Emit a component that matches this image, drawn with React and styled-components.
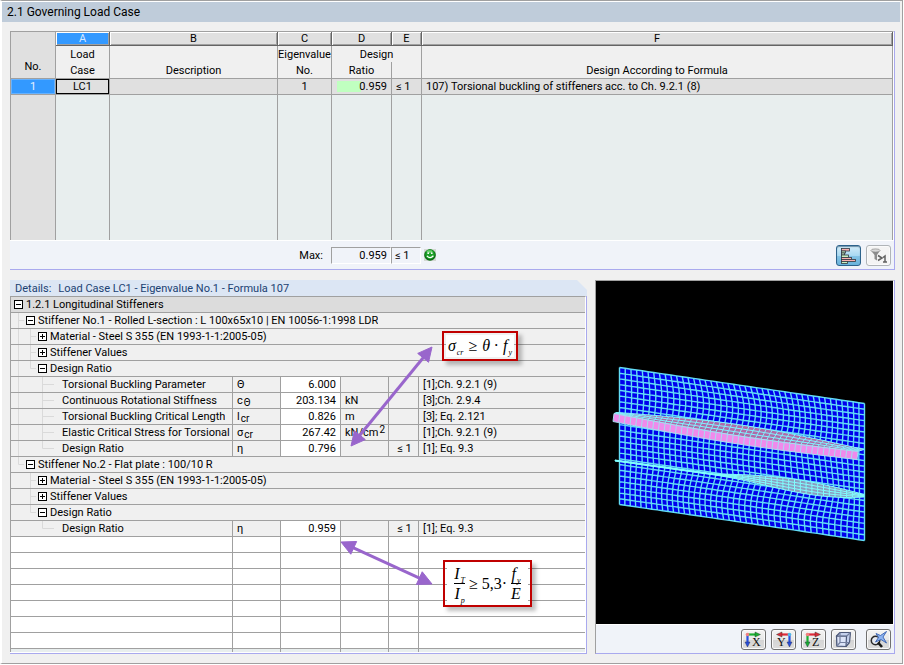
import React from 'react'
import styled, { createGlobalStyle, css } from 'styled-components'

const palette = {
  page: '#f0f0f0',
  line: '#a0a0a0',
  dark: '#646464',
  lavender: '#a9a9ee',
  footer: '#f0f3f9',
  sheet: '#e8eeee',
  header: '#e0e0e0',
  selected: '#3399ff',
  text: '#000',
  purple: '#9966cc',
  red: '#c00000',
}

const GlobalStyle = createGlobalStyle`
  * {
    box-sizing: border-box;
  }
  body {
    margin: 0;
    background: #fff;
    color: ${palette.text};
    font: 11px/15px Roboto, 'Liberation Sans', sans-serif;
  }
  button, input {
    font: inherit;
    color: inherit;
  }
`

const Frame = styled.main`
  margin: 0 1px 1px 0;
  border: 1px solid ${palette.line};
  border-left: 2px solid #fff;
  background: ${palette.page};
`

const Title = styled.h1`
  margin: 0 2px 0 0;
  padding: 0 5px;
  border-top: 1px solid #fff;
  height: 21px;
  background: #bfccda;
  font: 12px/20px Roboto, 'Open Sans', sans-serif;
`

const Content = styled.div`
  display: flex;
  flex-direction: column;
  gap: 10px;
  padding: 9px 7px 9px 8px;
`

const Panel = styled.section`
  border-right: 1px solid ${palette.lavender};
  border-bottom: 1px solid ${palette.lavender};
`

const Sheet = styled.table`
  width: 100%;
  table-layout: fixed;
  border-collapse: separate;
  border-spacing: 0;
  border-top: 1px solid ${palette.line};
  border-right: 1px solid #fff;
`

const Col = styled.col`
  width: ${props => (props.$width ? props.$width + 'px' : 'auto')};
`

const cell = css`
  padding: 0;
  overflow: hidden;
  white-space: nowrap;
  font-weight: normal;
  border: 0 solid ${palette.line};
  border-right-width: 1px;
  &:first-child {
    border-left-width: 1px;
  }
`

const Letter = styled.th`
  ${cell}
  height: 14px;
  line-height: 13px;
  border-right-color: ${palette.dark};
  border-bottom: 1px solid ${palette.dark};
  box-shadow: inset 1px 1px #fff, inset -1px -1px ${palette.line};
  background: ${props => (props.$selected ? palette.selected : palette.header)};
  color: ${props => (props.$selected ? '#d8e8ff' : palette.text)};
`

const Corner = styled.th`
  ${cell}
  border-bottom-width: 1px;
  background: ${palette.header};
  vertical-align: bottom;
  line-height: 23px;
`

const Head = styled.th`
  ${cell}
  height: ${props => (props.$last ? 17 : 16)}px;
  border-bottom-width: ${props => (props.$last ? 1 : 0)}px;
  &:first-child {
    border-left-width: 0;
  }
`

const RowNumber = styled.th`
  ${cell}
  height: 16px;
  border-bottom-width: 1px;
  background: ${palette.selected};
  box-shadow: inset 0 0 0 1px #66b2ff;
  color: #e6f0ff;
`

const ResultCell = styled.td`
  ${cell}
  height: 16px;
  padding: 0 4px;
  border-bottom-width: 1px;
  background: ${palette.header};
  text-align: ${props => props.$align || 'left'};
  ${props => props.$current && 'box-shadow: inset 0 0 0 1px #000;'}
`

const RatioCell = styled(ResultCell)`
  background: linear-gradient(#c0ffc0, #c0ffc0) 5px 2px / 24px 11px no-repeat
    ${palette.header};
  text-align: right;
`

const BlankCell = styled.td`
  ${cell}
  height: 145px;
  background: ${props => (props.$header ? palette.header : palette.sheet)};
`

const Footer = styled.footer`
  display: flex;
  align-items: center;
  height: 29px;
  border-top: 1px solid #fff;
  background: ${palette.footer};
`

const MaxLabel = styled.label`
  width: 321px;
  padding-right: 8px;
  text-align: right;
`

const MaxField = styled.input`
  width: ${props => props.$width}px;
  height: 17px;
  padding: 0 3px;
  border: 1px solid #fff;
  border-top-color: ${palette.line};
  border-left-color: ${palette.line};
  background: ${palette.footer};
  text-align: ${props => props.$align || 'left'};
  outline: none;
`

const Smiley = styled.svg`
  width: 12px;
  height: 12px;
  margin-left: 3px;
`

const Tools = styled.div`
  display: flex;
  gap: 5px;
  margin-left: auto;
  padding-right: ${props => props.$right}px;
`

const ToolButton = styled.button`
  display: flex;
  align-items: center;
  justify-content: center;
  width: 25px;
  height: 21px;
  padding: 0;
  border: 1px solid #707070;
  border-radius: 3px;
  background: linear-gradient(#f4f4f4, #e8e8e8 50%, #d4d4d4 51%, #dcdcdc);
  box-shadow: inset 0 0 0 1px #fafafa;
  ${props =>
    props.$variant === 'active' &&
    css`
      border-color: #2c628b;
      background: linear-gradient(#d4ecf8, #a9d9f2 50%, #86c4e6 51%, #68b3db);
      box-shadow: inset 0 1px 1px #6d91a8;
    `}
  ${props =>
    props.$variant === 'muted' &&
    css`
      border-color: #b0b4b8;
      background: #f4f4f4;
    `}
  ${props => props.$apart && 'margin-left: 5px;'}
  svg {
    flex: none;
    width: 19px;
    height: 17px;
  }
`

const Lower = styled.div`
  display: grid;
  grid-template-columns: minmax(0, 1fr) 300px;
  gap: 8px;
`

const Details = styled.section`
  position: relative;
`

const DetailsTitle = styled.h2`
  margin: 0;
  height: 16px;
  padding-left: 5px;
  background: #dce6f4;
  clip-path: polygon(0 0, calc(100% - 10px) 0, 100% 10px, 100% 100%, 0 100%);
  color: #1b4172;
  font: inherit;
  line-height: 17px;
  span {
    margin-left: 7px;
  }
`

const DetailsBody = styled(Panel)`
  padding-bottom: 1px;
  background: #fff;
`

const DetailCell = styled.td`
  ${cell}
  height: ${props => (props.$cut ? 3 : 16)}px;
  padding-left: ${props => (props.$first ? 1 : 4)}px;
  padding-right: ${props => (props.$align === 'right' ? 4 : 2)}px;
  border-bottom-width: ${props => (props.$cut ? 0 : 1)}px;
  background: ${props => props.$tone || palette.page};
  text-align: ${props => props.$align || 'left'};
  &:last-child {
    border-right-width: 0;
  }
  sub, sup {
    margin-left: 1px;
    font-size: 10px;
    line-height: 0;
    vertical-align: -2px;
  }
  sup {
    vertical-align: 3px;
  }
`

const TreeItem = styled.div`
  display: flex;
  height: 15px;
  overflow: hidden;
`

const Guide = styled.svg`
  flex: none;
  width: ${props => (props.$wide ? 24 : 12)}px;
  height: 15px;
`

const Toggle = styled.button`
  flex: none;
  width: 9px;
  height: 9px;
  margin: 3px 1px 3px 2px;
  padding: 0;
  border: 1px solid #000;
  background: #fff;
  svg {
    display: block;
    width: 7px;
    height: 7px;
  }
`

const TreeLabel = styled.span`
  padding-left: 2px;
  overflow: hidden;
`

const Arrows = styled.svg`
  position: absolute;
  inset: 0;
  width: 100%;
  height: 100%;
  pointer-events: none;
`

const Callout = styled.div`
  position: absolute;
  left: ${props => props.$left}px;
  top: ${props => props.$top}px;
  width: ${props => props.$width}px;
  height: ${props => props.$height}px;
  padding: 2px;
  border: 2px solid ${palette.red};
  box-shadow: 4px 4px 4px rgba(0, 0, 0, 0.25);
`

const Formula = styled.div`
  display: flex;
  align-items: center;
  justify-content: center;
  gap: ${props => props.$gap || 4}px;
  height: 100%;
  background: #fff;
  font: italic 16px/20px 'Liberation Serif', serif;
  sub {
    margin-left: 1px;
    font-size: 8px;
    line-height: 0;
    vertical-align: -4px;
  }
  b {
    font-style: normal;
    font-weight: normal;
  }
`

const Fraction = styled.span`
  display: flex;
  flex-direction: column;
  text-align: center;
  line-height: 18px;
  span + span {
    border-top: 1px solid #000;
    line-height: 19px;
  }
`

const Preview = styled(Panel)`
  display: flex;
  flex-direction: column;
  border-left: 1px solid ${palette.line};
`

const Scene = styled.svg`
  display: block;
  flex: 1;
  width: 100%;
  min-height: 0;
  border-top: 1px solid ${palette.line};
  border-right: 1px solid #fff;
  background: #000;
`

const details = [
  { kind: 'root', open: true, guides: '', label: '1.2.1 Longitudinal Stiffeners' },
  {
    kind: 'group',
    open: true,
    guides: 't',
    label: 'Stiffener No.1 - Rolled L-section : L 100x65x10 | EN 10056-1:1998 LDR',
  },
  { kind: 'group', guides: '|t', label: 'Material - Steel S 355 (EN 1993-1-1:2005-05)' },
  { kind: 'group', guides: '|t', label: 'Stiffener Values' },
  { kind: 'group', open: true, guides: '|l', label: 'Design Ratio' },
  { guides: '| t', label: 'Torsional Buckling Parameter', symbol: 'Θ', value: '6.000', source: '[1];Ch. 9.2.1 (9)' },
  {
    guides: '| t',
    label: 'Continuous Rotational Stiffness',
    symbol: 'c',
    index: 'Θ',
    value: '203.134',
    unit: 'kN',
    source: '[3];Ch. 2.9.4',
  },
  {
    guides: '| t',
    label: 'Torsional Buckling Critical Length',
    symbol: 'l',
    index: 'cr',
    value: '0.826',
    unit: 'm',
    source: '[3]; Eq. 2.121',
  },
  {
    guides: '| t',
    label: 'Elastic Critical Stress for Torsional B',
    symbol: 'σ',
    index: 'cr',
    value: '267.42',
    unit: 'kN/cm',
    power: '2',
    source: '[1];Ch. 9.2.1 (9)',
  },
  { guides: '| l', label: 'Design Ratio', symbol: 'η', value: '0.796', limit: '≤ 1', source: '[1]; Eq. 9.3' },
  { kind: 'group', open: true, guides: 'l', label: 'Stiffener No.2 - Flat plate : 100/10 R' },
  { kind: 'group', guides: ' t', label: 'Material - Steel S 355 (EN 1993-1-1:2005-05)' },
  { kind: 'group', guides: ' t', label: 'Stiffener Values' },
  { kind: 'group', open: true, guides: ' l', label: 'Design Ratio' },
  { guides: '  l', label: 'Design Ratio', symbol: 'η', value: '0.959', limit: '≤ 1', source: '[1]; Eq. 9.3' },
]

// one 12px step of the tree: | passes through, t branches, l ends
const guidePaths = {
  ' ': '',
  '|': 'M6.5 0V15',
  t: 'M6.5 0V15M6.5 7.5H',
  l: 'M6.5 0V7.5H',
}

const Tree = ({ item }) => (
  <TreeItem>
    {item.guides.split('').map((step, i) => {
      const wide = !item.kind && i === item.guides.length - 1
      const branch = step === 't' || step === 'l'
      return (
        <Guide key={i} $wide={wide} aria-hidden="true">
          <path
            d={guidePaths[step] + (branch ? (wide ? 18 : 12) : '')}
            fill="none"
            stroke="#dadada"
          />
        </Guide>
      )
    })}
    {item.kind && (
      <Toggle aria-expanded={!!item.open} aria-label={item.label}>
        <svg viewBox="0 0 7 7">
          <path d={item.open ? 'M1 3.5H6' : 'M1 3.5H6M3.5 1V6'} stroke="#000" />
        </svg>
      </Toggle>
    )}
    <TreeLabel>{item.label}</TreeLabel>
  </TreeItem>
)

const DetailRow = ({ item }) =>
  item.kind ? (
    <tr>
      <DetailCell $first colSpan={6} $tone={item.kind === 'root' ? '#dcdcdc' : undefined}>
        <Tree item={item} />
      </DetailCell>
    </tr>
  ) : (
    <tr>
      <DetailCell $first>
        <Tree item={item} />
      </DetailCell>
      <DetailCell>
        {item.symbol}
        {item.index && <sub>{item.index}</sub>}
      </DetailCell>
      <DetailCell $tone="#fff" $align="right">
        {item.value}
      </DetailCell>
      <DetailCell>
        {item.unit}
        {item.power && <sup>{item.power}</sup>}
      </DetailCell>
      <DetailCell $align="center">{item.limit}</DetailCell>
      <DetailCell>{item.source}</DetailCell>
    </tr>
  )

const EmptyRow = ({ cut }) => (
  <tr>
    {[0, 1, 2, 3, 4, 5].map(i => (
      <DetailCell key={i} $cut={cut} $tone={cut ? palette.sheet : '#fff'} />
    ))}
  </tr>
)

const DoubleArrow = ({ x1, y1, x2, y2 }) => {
  const length = Math.hypot(x2 - x1, y2 - y1)
  const ux = (x2 - x1) / length
  const uy = (y2 - y1) / length
  const head = (x, y, dir) => {
    const bx = x + ux * 14 * dir
    const by = y + uy * 14 * dir
    return `${x},${y} ${bx - uy * 7},${by + ux * 7} ${bx + uy * 7},${by - ux * 7}`
  }
  return (
    <g fill={palette.purple} stroke={palette.purple}>
      <line
        x1={x1 + ux * 12}
        y1={y1 + uy * 12}
        x2={x2 - ux * 12}
        y2={y2 - uy * 12}
        strokeWidth="3"
      />
      <polygon points={head(x1, y1, 1)} />
      <polygon points={head(x2, y2, -1)} />
    </g>
  )
}

const Strip = ({ point, cols, rows, fill, stroke, width = 1 }) => {
  const trace = (count, at) =>
    Array.from({ length: count + 1 }, (_, i) => {
      const [x, y] = at(i / count)
      return `${i ? 'L' : 'M'}${x.toFixed(1)} ${y.toFixed(1)}`
    }).join('')
  const along = Array.from({ length: rows + 1 }, (_, j) => trace(cols, s => point(s, j / rows)))
  const across = Array.from({ length: cols + 1 }, (_, i) => trace(rows, t => point(i / cols, t)))
  const outline =
    trace(cols, s => point(s, 0)) +
    trace(rows, t => point(1, t)).replace('M', 'L') +
    trace(cols, s => point(1 - s, 1)).replace('M', 'L') +
    'Z'
  return (
    <g>
      <path d={outline} fill={fill} />
      <path d={along.join('') + across.join('')} fill="none" stroke={stroke} strokeWidth={width} />
    </g>
  )
}

const bump = (v, from, to) => (v > from && v < to ? Math.sin((Math.PI * (v - from)) / (to - from)) : 0)

const platePoint = (s, t) => {
  const w =
    -5 * bump(s, 0, 1) * bump(t, 0, 0.36) +
    2 * bump(s, 0, 1) * bump(t, 0.36, 0.68) +
    6 * bump(s, 0, 0.95) * bump(t, 0.68, 1.1) -
    4 * bump(s, 0.6, 1) * bump(t, 0.4, 0.9)
  return [619.5 + s * 245 - w, 367 + s * 36 + t * 137 - w * 0.2]
}

const anglePoint = (s, t) => {
  const x = 614 + s * 244 - t
  return [x, 413 + s * 38 + t * 8 + 3 * Math.sin(Math.PI * s)]
}

const flangePoint = (s, t) => {
  const top = 412 + s * 37 - 6 * Math.sin(Math.PI * s)
  const bottom = 413 + s * 38 + 3 * Math.sin(Math.PI * s)
  return [617 + s * 247 - t * (3 + s * 4), top + (bottom - top) * t]
}

const flatPoint = (s, t) => {
  const swell = bump(s, 0.4, 1.02)
  const top = 459.5 + s * 35 - 6 * swell
  return [615 + s * 249, top + t * (1 + 16 * swell * s)]
}

const PlateModel = () => (
  <Scene viewBox="596 281 297 342" role="img" aria-label="Buckling shape of the stiffened plate">
    <Strip point={platePoint} cols={43} rows={24} fill="#0000ec" stroke="#62dcf6" width={1.4} />
    <Strip point={flatPoint} cols={43} rows={4} fill="#8b9cc0" stroke="#80ffff" />
    <Strip point={flangePoint} cols={43} rows={3} fill="#b06aa8" stroke="#80f4ff" />
    <Strip point={anglePoint} cols={43} rows={1} fill="#f08aec" stroke="#a8dcf0" />
  </Scene>
)

const SmileyIcon = () => (
  <Smiley viewBox="0 0 12 12" role="img" aria-label="Design passed">
    <rect width="12" height="12" fill="#d4d8d4" />
    <circle cx="6" cy="6" r="5.8" fill="#0a6a12" />
    <circle cx="6" cy="5.4" r="4.8" fill="#1ca028" />
    <ellipse cx="5.5" cy="2.6" rx="3" ry="1.4" fill="#6cd070" />
    <circle cx="4.2" cy="4.2" r="0.9" fill="#fff" />
    <circle cx="7.8" cy="4.2" r="0.9" fill="#fff" />
    <path d="M3 6.8Q6 10.6 9.4 6.8" fill="none" stroke="#fff" strokeWidth="1.3" />
  </Smiley>
)

const BarsIcon = () => (
  <svg viewBox="0 0 19 17">
    <g stroke="#303840" strokeWidth="0.8">
      <rect x="2.5" y="1.5" width="8" height="2.5" fill="#f8b0b0" />
      <rect x="2.5" y="4" width="4" height="2" fill="#c8f0c0" />
      <rect x="2.5" y="6" width="3" height="2" fill="#c8f0c0" />
      <rect x="2.5" y="8" width="7" height="2.5" fill="#c8f0c0" />
      <rect x="2.5" y="10.5" width="10" height="2" fill="#f8b0b0" />
      <rect x="2.5" y="12.5" width="14" height="2" fill="#f8b0b0" />
      <rect x="2.5" y="14.5" width="6" height="2" fill="#c8f0c0" />
    </g>
  </svg>
)

const FilterIcon = () => (
  <svg viewBox="0 0 19 17">
    <path d="M2 3.5L5.5 8V12L8 13.5V8L11 3.5Z" fill="#8c8c8c" />
    <ellipse cx="6.5" cy="3.5" rx="4.6" ry="1.6" fill="#d8d8d8" stroke="#8a8a8a" strokeWidth="0.7" />
    <path d="M9 8.5L13 11L9 13.5M14 10.5L16 9V15M14 15H18" fill="none" stroke="#606060" strokeWidth="1.5" />
  </svg>
)

const AxisLetter = styled.text`
  font: 12px 'Liberation Serif', serif;
  fill: #111;
`

const axisColors = { x: ['#18b030', '#2850e0'], y: ['#e02838', '#2850e0'], z: ['#e02838', '#18b030'] }

const AxisIcon = ({ axis }) => {
  const [across, down] = axisColors[axis]
  const flipped = axis === 'y'
  return (
    <svg viewBox="0 0 19 17">
      <g transform={flipped ? 'matrix(-1 0 0 1 19 0)' : undefined}>
        <path d="M4 3.5H12" stroke={across} strokeWidth="2.2" />
        <path d="M11 1L16.5 3.5L11 6Z" fill={across} stroke="#203020" strokeWidth="0.4" />
        <path d="M3.5 3.5V12" stroke={down} strokeWidth="2.2" />
        <path d="M1 11L3.5 16L6 11Z" fill={down} stroke="#202040" strokeWidth="0.4" />
        <circle cx="3.5" cy="3.5" r="1.8" fill={flipped ? '#50b8e8' : '#f08080'} />
      </g>
      <AxisLetter x={flipped ? 3 : 8} y="15">
        {axis.toUpperCase()}
      </AxisLetter>
    </svg>
  )
}

const CubeIcon = () => (
  <svg viewBox="0 0 19 17">
    <g fill="#c4d0ec" stroke="#4c5878" strokeWidth="1.2" strokeLinejoin="round">
      <path d="M2.5 5L6 1.5H16.5L15.5 11.5L12 15.5L3 15Z" />
      <path d="M2.5 5L12.5 5.2L12 15.5L3 15Z" fill="#dce4f8" />
      <path d="M12.5 5.2L16.5 1.5M6 1.5V11.5L3 15M6 11.5H15.5" fill="none" stroke="#7480a0" />
    </g>
  </svg>
)

const LoupeIcon = () => (
  <svg viewBox="0 0 19 17">
    <circle cx="6.5" cy="9.5" r="4.2" fill="#e4e8f0" stroke="#282828" strokeWidth="1.5" />
    <path d="M9 11.5L13 16" stroke="#181818" strokeWidth="2.6" />
    <path
      d="M7 2.5L11.5 4.5L17.5 0.5L14 6L17.5 12L12 8.5L6.5 11L9.5 6.5Z"
      fill="#8eb4f0"
      stroke="#3860b0"
      strokeWidth="0.9"
    />
  </svg>
)

const ResultsPanel = () => (
  <Panel>
    <Sheet>
      <colgroup>
        {[46, 54, 168, 54, 60, 30, 0].map((width, i) => (
          <Col key={i} $width={width} />
        ))}
      </colgroup>
      <thead>
        <tr>
          <Corner rowSpan={3}>No.</Corner>
          {['A', 'B', 'C', 'D', 'E', 'F'].map(letter => (
            <Letter key={letter} $selected={letter === 'A'}>
              {letter}
            </Letter>
          ))}
        </tr>
        <tr>
          <Head>Load</Head>
          <Head />
          <Head>Eigenvalue</Head>
          <Head colSpan={2}>Design</Head>
          <Head />
        </tr>
        <tr>
          <Head $last>Case</Head>
          <Head $last>Description</Head>
          <Head $last>No.</Head>
          <Head $last>Ratio</Head>
          <Head $last />
          <Head $last>Design According to Formula</Head>
        </tr>
      </thead>
      <tbody>
        <tr>
          <RowNumber scope="row">1</RowNumber>
          <ResultCell $current $align="center">
            LC1
          </ResultCell>
          <ResultCell />
          <ResultCell $align="center">1</ResultCell>
          <RatioCell>0.959</RatioCell>
          <ResultCell>≤ 1</ResultCell>
          <ResultCell>107) Torsional buckling of stiffeners acc. to Ch. 9.2.1 (8)</ResultCell>
        </tr>
        <tr>
          <BlankCell $header />
          {[1, 2, 3, 4, 5, 6].map(i => (
            <BlankCell key={i} />
          ))}
        </tr>
      </tbody>
    </Sheet>
    <Footer>
      <MaxLabel htmlFor="max-ratio">Max:</MaxLabel>
      <MaxField id="max-ratio" $width={60} $align="right" readOnly value="0.959" />
      <MaxField aria-label="Limit" $width={30} readOnly value="≤ 1" />
      <SmileyIcon />
      <Tools $right={3}>
        <ToolButton $variant="active" aria-label="Show colour bars" aria-pressed="true">
          <BarsIcon />
        </ToolButton>
        <ToolButton $variant="muted" aria-label="Show only ratios above 1">
          <FilterIcon />
        </ToolButton>
      </Tools>
    </Footer>
  </Panel>
)

const DetailsPanel = () => (
  <Details>
    <DetailsTitle>
      Details:<span>Load Case LC1 - Eigenvalue No.1 - Formula 107</span>
    </DetailsTitle>
    <DetailsBody as="div">
      <Sheet>
        <colgroup>
          {[223, 48, 60, 48, 30, 0].map((width, i) => (
            <Col key={i} $width={width} />
          ))}
        </colgroup>
        <tbody>
          {details.map((item, i) => (
            <DetailRow key={i} item={item} />
          ))}
          {[0, 1, 2, 3, 4, 5, 6].map(i => (
            <EmptyRow key={i} />
          ))}
          <EmptyRow cut />
        </tbody>
      </Sheet>
    </DetailsBody>
    <Callout $left={432} $top={51} $width={76} $height={30}>
      <Formula $gap={5}>
        <span>
          σ<sub>cr</sub>
        </span>
        <b>≥</b>
        <span>θ ·</span>
        <span>
          f<sub>y</sub>
        </span>
      </Formula>
    </Callout>
    <Callout $left={433} $top={280} $width={89} $height={47}>
      <Formula>
        <Fraction>
          <span>
            I<sub>T</sub>
          </span>
          <span>
            I<sub>p</sub>
          </span>
        </Fraction>
        <b>≥</b>
        <b>5,3·</b>
        <Fraction>
          <span>
            f<sub>y</sub>
          </span>
          <span>E</span>
        </Fraction>
      </Formula>
    </Callout>
    <Arrows>
      <DoubleArrow x1={422} y1={67} x2={341} y2={166} />
      <DoubleArrow x1={331} y1={262} x2={422} y2={304} />
    </Arrows>
  </Details>
)

const PreviewPanel = () => (
  <Preview>
    <PlateModel />
    <Footer>
      <Tools $right={3}>
        <ToolButton aria-label="View in X">
          <AxisIcon axis="x" />
        </ToolButton>
        <ToolButton aria-label="View in Y">
          <AxisIcon axis="y" />
        </ToolButton>
        <ToolButton aria-label="View in Z">
          <AxisIcon axis="z" />
        </ToolButton>
        <ToolButton aria-label="Isometric view">
          <CubeIcon />
        </ToolButton>
        <ToolButton $apart aria-label="Show whole model">
          <LoupeIcon />
        </ToolButton>
      </Tools>
    </Footer>
  </Preview>
)

const App = () => (
  <>
    <GlobalStyle />
    <Frame>
      <Title>2.1 Governing Load Case</Title>
      <Content>
        <ResultsPanel />
        <Lower>
          <DetailsPanel />
          <PreviewPanel />
        </Lower>
      </Content>
    </Frame>
  </>
)

export default App
